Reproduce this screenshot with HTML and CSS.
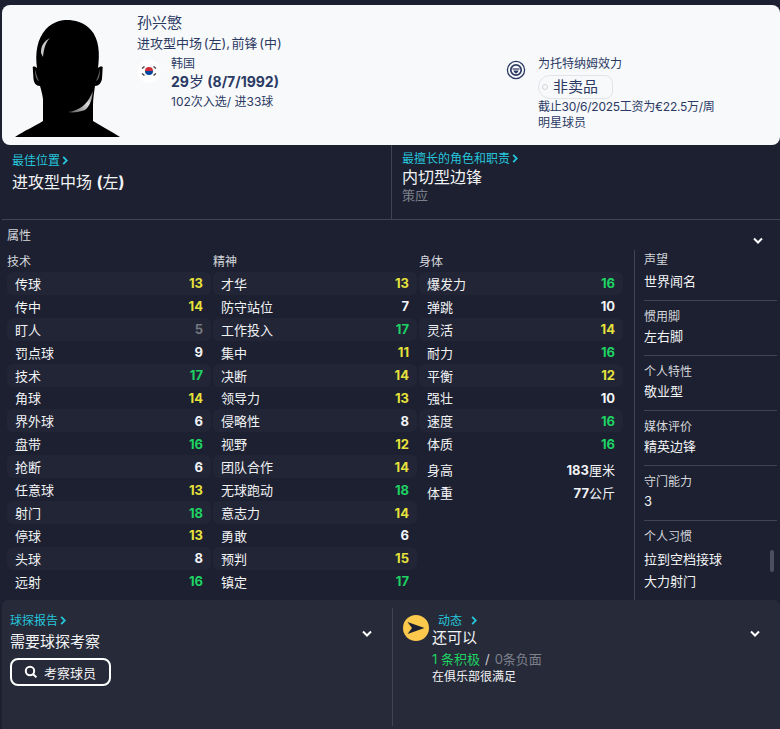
FILE: index.html
```html
<!DOCTYPE html>
<html lang="zh">
<head>
    <meta charset="UTF-8">
    <title>孙兴慜</title>
    <link rel="stylesheet" href="styles.css">
</head>
<body>
    <header class="card">
        <svg class="portrait" viewBox="0 0 120 125" width="120" height="125">
            <defs>
                <linearGradient id="jaw" x1="0" y1="1" x2="1" y2="0">
                    <stop offset="0" stop-color="#555"/>
                    <stop offset=".6" stop-color="#ddd"/>
                    <stop offset="1" stop-color="#666"/>
                </linearGradient>
            </defs>
            <path fill="#000" d="M5 122 C14 116 25 111 33 106 L33 84 C32 78 31 74 30 71 C26 71 24 68 23.5 64 L22.7 52 C24 51 26 52 27 53 C25 38 27 24 36 14 C44 6 52 5 57 5 C64 5 74 7 81 15 C89 24 90 38 88 53 C89 52 91 51 92.7 52 L92 64 C91 68 89 71 85 71 C84 78 83 84 83 90 L83 106 C91 111 101 116 110 122 Z"/>
            <path fill="url(#jaw)" d="M58 97 C68 96 77 90 81 80 L83 76 C82 86 79 92 75 95 C69 97 63 98 58 97 Z"/>
            <path fill="#c9c9c9" d="M31 38 C31 31 33 27 40 23 C36 27 34 32 33 42 Z"/>
            <path fill="#666" d="M25 54 C26 58 27 62 29 66 C26 65 25 60 25 54 Z"/>
            <path fill="#666" d="M90 54 C89 58 88 62 86 66 C89 65 90 60 90 54 Z"/>
        </svg>
        <div class="info">
            <div class="name">孙兴慜</div>
            <div class="pos">进攻型中场 (左), 前锋 (中)</div>
            <div class="details">
                <div class="bio">
                    <svg class="flag" viewBox="0 0 24 24" width="24" height="24">
                        <circle cx="12" cy="12" r="11.5" fill="#fff"/>
                        <path fill="#cd2e3a" d="M8 12 A4 4 0 0 1 16 12 Z"/>
                        <path fill="#0047a0" d="M8 12 A4 4 0 0 0 16 12 Z"/>
                        <g stroke="#444" stroke-width="1.5">
                            <path d="M5 9.5 L7.5 7.5"/><path d="M5 14.5 L7.5 16.5"/>
                            <path d="M16.5 7.5 L19 9.5"/><path d="M16.5 16.5 L19 14.5"/>
                        </g>
                    </svg>
                    <div>
                        <div class="small">韩国</div>
                        <div class="age">29<span>岁</span> (8/7/1992)</div>
                        <div class="small caps">102次入选/ 进33球</div>
                    </div>
                </div>
                <div class="club">
                    <svg class="badge" viewBox="0 0 20 20" width="20" height="20">
                        <circle cx="10" cy="10" r="8.6" fill="none" stroke="#2b3a63" stroke-width="1.3"/>
                        <circle cx="10" cy="10" r="5.2" fill="none" stroke="#2b3a63" stroke-width="1.7"/>
                        <rect x="6.5" y="8.4" width="7" height="1.2" fill="#2b3a63"/>
                        <path fill="#2b3a63" d="M7.5 10.6 H12.5 C12.3 12 11.3 13 10 13.4 C8.7 13 7.7 12 7.5 10.6 Z"/>
                    </svg>
                    <div>
                        <div class="small">为托特纳姆效力</div>
                        <div class="tag"><i></i>非卖品</div>
                        <div class="small wage">截止30/6/2025工资为€22.5万/周</div>
                        <div class="small">明星球员</div>
                    </div>
                </div>
            </div>
        </div>
    </header>

    <section class="summary">
        <div class="best">
            <a class="link">最佳位置<svg class="arrow" viewBox="0 0 6 10"><path d="M1 1 L5 5 L1 9"/></svg></a>
            <div class="big">进攻型中场 <b>(</b>左<b>)</b></div>
        </div>
        <div class="best role">
            <a class="link">最擅长的角色和职责<svg class="arrow" viewBox="0 0 6 10"><path d="M1 1 L5 5 L1 9"/></svg></a>
            <div class="big">内切型边锋</div>
            <div class="duty">策应</div>
        </div>
    </section>

    <section class="attrs">
        <div class="attrs-head">
            <span>属性</span>
            <svg class="chev" viewBox="0 0 12 8"><path d="M2 1.5 L6 5.5 L10 1.5"/></svg>
        </div>
        <div class="attrs-body">
            <div class="col">
                <h3>技术</h3>
                <div class="row"><span>传球</span><b class="y">13</b></div>
                <div class="row"><span>传中</span><b class="y">14</b></div>
                <div class="row"><span>盯人</span><b class="n">5</b></div>
                <div class="row"><span>罚点球</span><b>9</b></div>
                <div class="row"><span>技术</span><b class="g">17</b></div>
                <div class="row"><span>角球</span><b class="y">14</b></div>
                <div class="row"><span>界外球</span><b>6</b></div>
                <div class="row"><span>盘带</span><b class="g">16</b></div>
                <div class="row"><span>抢断</span><b>6</b></div>
                <div class="row"><span>任意球</span><b class="y">13</b></div>
                <div class="row"><span>射门</span><b class="g">18</b></div>
                <div class="row"><span>停球</span><b class="y">13</b></div>
                <div class="row"><span>头球</span><b>8</b></div>
                <div class="row"><span>远射</span><b class="g">16</b></div>
            </div>
            <div class="col">
                <h3>精神</h3>
                <div class="row"><span>才华</span><b class="y">13</b></div>
                <div class="row"><span>防守站位</span><b>7</b></div>
                <div class="row"><span>工作投入</span><b class="g">17</b></div>
                <div class="row"><span>集中</span><b class="y">11</b></div>
                <div class="row"><span>决断</span><b class="y">14</b></div>
                <div class="row"><span>领导力</span><b class="y">13</b></div>
                <div class="row"><span>侵略性</span><b>8</b></div>
                <div class="row"><span>视野</span><b class="y">12</b></div>
                <div class="row"><span>团队合作</span><b class="y">14</b></div>
                <div class="row"><span>无球跑动</span><b class="g">18</b></div>
                <div class="row"><span>意志力</span><b class="y">14</b></div>
                <div class="row"><span>勇敢</span><b>6</b></div>
                <div class="row"><span>预判</span><b class="y">15</b></div>
                <div class="row"><span>镇定</span><b class="g">17</b></div>
            </div>
            <div class="col">
                <h3>身体</h3>
                <div class="row"><span>爆发力</span><b class="g">16</b></div>
                <div class="row"><span>弹跳</span><b>10</b></div>
                <div class="row"><span>灵活</span><b class="y">14</b></div>
                <div class="row"><span>耐力</span><b class="g">16</b></div>
                <div class="row"><span>平衡</span><b class="y">12</b></div>
                <div class="row"><span>强壮</span><b>10</b></div>
                <div class="row"><span>速度</span><b class="g">16</b></div>
                <div class="row"><span>体质</span><b class="g">16</b></div>
                <div class="measures">
                    <div class="row"><span>身高</span><b>183<em>厘米</em></b></div>
                    <div class="row"><span>体重</span><b>77<em>公斤</em></b></div>
                </div>
            </div>
            <aside class="side">
                <div class="item top"><div class="k">声望</div><div class="v">世界闻名</div></div>
                <div class="item"><div class="k">惯用脚</div><div class="v">左右脚</div></div>
                <div class="item"><div class="k">个人特性</div><div class="v">敬业型</div></div>
                <div class="item"><div class="k">媒体评价</div><div class="v">精英边锋</div></div>
                <div class="item"><div class="k">守门能力</div><div class="v">3</div></div>
                <div class="item last">
                    <div class="k">个人习惯</div>
                    <div class="v first">拉到空档接球</div>
                    <div class="v">大力射门</div>
                </div>
                <div class="thumb"></div>
            </aside>
        </div>
    </section>

    <footer class="bottom">
        <div class="scout">
            <div class="scout-text">
                <a class="link">球探报告<svg class="arrow" viewBox="0 0 6 10"><path d="M1 1 L5 5 L1 9"/></svg></a>
                <div class="mid">需要球探考察</div>
                <button class="btn">
                    <svg viewBox="0 0 14 14" width="14" height="14"><circle cx="6" cy="6" r="4.2"/><path d="M9.2 9.2 L12.4 12.4"/></svg>
                    考察球员
                </button>
            </div>
            <svg class="chev" viewBox="0 0 12 8"><path d="M2 1.5 L6 5.5 L10 1.5"/></svg>
        </div>
        <div class="morale">
            <svg class="dart" viewBox="0 0 26 26" width="26" height="26">
                <circle cx="13" cy="13" r="13" fill="#fcc94d"/>
                <path fill="#1c2030" d="M4.5 7 L21.5 13 L4.5 19 L9 13 Z"/>
            </svg>
            <div class="morale-text">
                <a class="link wide">动态<svg class="arrow" viewBox="0 0 6 10"><path d="M1 1 L5 5 L1 9"/></svg></a>
                <div class="mid">还可以</div>
                <div class="counts"><span class="pos-count">1 条积极</span><span class="slash">/</span><span class="neg">0条负面</span></div>
                <div class="note">在俱乐部很满足</div>
            </div>
            <svg class="chev" viewBox="0 0 12 8"><path d="M2 1.5 L6 5.5 L10 1.5"/></svg>
        </div>
    </footer>
</body>
</html>
```

FILE: styles.css
```css
* {
    margin: 0;
    padding: 0;
    box-sizing: border-box;
}

body {
    width: 780px;
    height: 729px;
    overflow: hidden;
    background-color: #1c2030;
    color: #f2f3f5;
    font-family: Inter, "Noto Sans CJK SC", sans-serif;
    font-size: 13px;
    padding-top: 5px;
}

/* player card */
.card {
    display: flex;
    height: 140px;
    margin-left: 2px;
    padding-left: 8px;
    background-color: #f8f9fb;
    border-radius: 8px;
    color: #2b3a63;
}

.portrait {
    flex: none;
    margin-top: 10px;
}

.info {
    flex: 1;
    margin: 7px 0 0 7px;
}

.name {
    font-size: 15px;
    line-height: 22px;
}

.pos {
    font-size: 13px;
    line-height: 18px;
    word-spacing: -2px;
}

.details {
    display: flex;
    margin-top: 4px;
}

.bio {
    display: flex;
    width: 369px;
}

.flag {
    margin-right: 10px;
    margin-top: 3px;
}

.small {
    font-size: 12px;
    line-height: 16px;
}

.age {
    font-size: 14px;
    font-weight: 700;
    line-height: 20px;
}

.age span {
    font-size: 15px;
    font-weight: 400;
}

.caps {
    line-height: 20px;
}

.club {
    display: flex;
}

.badge {
    margin-right: 12px;
    margin-top: 4px;
}

.tag {
    position: relative;
    width: 75px;
    height: 24px;
    margin-top: 3px;
    padding-left: 14px;
    border: 1px solid #e2e4e8;
    border-radius: 12px 8px 8px 12px;
    font-size: 15px;
    line-height: 22px;
}

.tag i {
    position: absolute;
    left: 3px;
    top: 8px;
    width: 6px;
    height: 6px;
    border: 1px solid #d3d5db;
    border-radius: 50%;
}

.wage {
    letter-spacing: -0.25px;
}

/* best position + role */
.summary {
    display: flex;
    height: 75px;
    margin-left: 2px;
    border-bottom: 1px solid #3f4352;
}

.best {
    width: 389px;
    padding: 8px 0 0 10px;
}

.best .big {
    margin-top: 1px;
}

.role {
    flex: 1;
    padding-top: 6px;
    border-left: 1px solid #3f4352;
}

.role .big {
    margin-top: 0;
    line-height: 20px;
}

.link {
    display: block;
    color: #25c6dc;
    font-size: 12px;
    line-height: 16px;
}

.arrow {
    width: 6px;
    height: 9px;
    margin-left: 2px;
    fill: none;
    stroke: #25c6dc;
    stroke-width: 2;
}

.big {
    font-size: 16px;
    line-height: 24px;
}

.duty {
    color: #7c808c;
    font-size: 13px;
    line-height: 16px;
}

/* attributes */
.attrs-head {
    display: flex;
    justify-content: space-between;
    height: 30px;
    padding: 8px 16px 0 7px;
    color: #d5d7dc;
    font-size: 12px;
    line-height: 16px;
}

.chev {
    flex: none;
    width: 12px;
    height: 8px;
    fill: none;
    stroke: #fff;
    stroke-width: 2;
}

.attrs-head .chev {
    margin-top: 9px;
}

.attrs-body {
    display: flex;
    height: 350px;
    padding-left: 7px;
}

.col {
    width: 204px;
    margin-right: 2px;
}

.col h3 {
    height: 22px;
    color: #d5d7dc;
    font-size: 12px;
    font-weight: 400;
    line-height: 24px;
}

.row {
    display: flex;
    justify-content: space-between;
    align-items: center;
    height: 22.92px;
    padding: 0 8px;
    border-radius: 6px;
}

.col > .row:nth-of-type(odd) {
    background-color: #212536;
}

.row b {
    font-weight: 700;
    font-size: 13px;
}

.row em {
    font-style: normal;
    font-weight: 400;
}

.y { color: #e6e23c; }
.g { color: #1fd264; }
.n { color: #74777f; }

.measures {
    margin-top: 3px;
}

/* right info column */
.side {
    position: relative;
    width: 143px;
    margin-left: 9px;
    padding-left: 9px;
    border-left: 1px solid #3f4352;
}

.item {
    height: 55px;
    padding-top: 7px;
    border-bottom: 1px solid #3f4352;
}

.item.top {
    height: 51px;
    padding-top: 1px;
}

.item.top .v {
    margin-top: 2px;
}

.item.last {
    border-bottom: 0;
}

.k {
    color: #d5d7dc;
    font-size: 12px;
    line-height: 18px;
}

.v {
    font-size: 13px;
    line-height: 20px;
}

.item.last .v {
    line-height: 22px;
}

.v.first {
    margin-top: 2px;
}

.thumb {
    position: absolute;
    right: 3px;
    top: 300px;
    width: 4px;
    height: 22px;
    background-color: #4b4f5e;
    border-radius: 2px;
}

/* scout + morale */
.bottom {
    display: flex;
    height: 129px;
    margin-left: 2px;
    padding-top: 8px;
    background-color: #272a38;
    border-radius: 6px 6px 0 0;
}

.scout {
    display: flex;
    justify-content: space-between;
    width: 390px;
    padding: 5px 19px 0 8px;
}

.scout > .chev {
    margin-top: 17px;
}

.morale > .chev {
    margin-top: 22px;
}

.mid {
    font-size: 15px;
    line-height: 22px;
}

.scout .mid {
    margin-top: 2px;
}

.btn {
    display: flex;
    align-items: center;
    gap: 6px;
    width: 101px;
    height: 28px;
    margin-top: 5px;
    padding-left: 12px;
    background: none;
    border: 2px solid #fff;
    border-radius: 8px;
    color: #f2f3f5;
    font-family: inherit;
    font-size: 13px;
}

.btn svg {
    fill: none;
    stroke: #fff;
    stroke-width: 2;
}

.morale {
    display: flex;
    flex: 1;
    height: 118px;
    padding: 0 19px 0 10px;
    border-left: 1px solid #3f4352;
}

.dart {
    flex: none;
    margin-top: 7px;
}

.morale-text {
    flex: 1;
    margin-left: 3px;
    padding-top: 5px;
}

.morale-text .mid {
    line-height: 18px;
}

.link.wide {
    padding-left: 6px;
}

.link.wide .arrow {
    margin-left: 9px;
}

.counts {
    margin-top: 2px;
    font-size: 13px;
    line-height: 20px;
}

.pos-count {
    color: #1fd264;
}

.slash {
    margin: 0 5px;
    color: #c8cad0;
}

.neg {
    color: #7c808c;
}

.note {
    font-size: 12px;
    line-height: 16px;
}
```
